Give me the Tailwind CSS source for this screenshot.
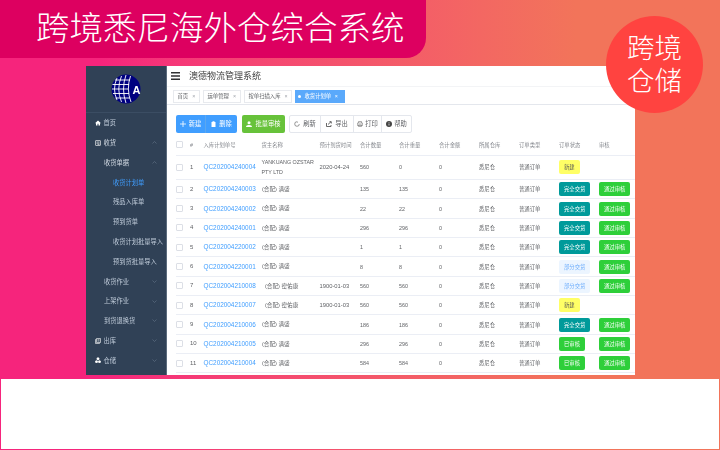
<!DOCTYPE html>
<html lang="zh"><head><meta charset="utf-8"><script src="https://cdn.jsdelivr.net/npm/@tailwindcss/browser@4"></script></head>
<body class="m-0 font-['Liberation_Sans','Noto_Sans_CJK_SC',sans-serif]">
<div class="relative w-[720px] h-[450px] overflow-hidden bg-linear-to-r from-[#f6247c] from-[14%] via-[#f4556b] via-[50%] to-[#f2745a] to-[80%]">
  <div class="w-[426px] h-[58px] bg-[#dd0060] rounded-br-[20px] flex items-center pl-[36px] text-white text-[33.5px] leading-none font-light tracking-normal">跨境悉尼海外仓综合系统</div>
  <div class="absolute left-[606px] top-[16px] w-[97px] h-[97px] rounded-full bg-[#ff4340] z-10 flex items-center justify-center text-white text-[27.5px] leading-[33px] font-light text-center">跨境<br>仓储</div>

  <div class="ml-[86px] mt-[8px] w-[549px] h-[309px] flex bg-white overflow-hidden blur-[0.25px]">
    <aside class="w-[81px] shrink-0 bg-[#304156] border-r border-[#5b6b7d] text-[#bfcbd9] text-[6.25px]">
      <div class="h-[47px] border-b border-[#3b4d63] flex items-center justify-center">
        <svg width="30" height="30" viewBox="0 0 30 30"><circle cx="15" cy="15" r="14.5" fill="#000080"/><g stroke="#fff" stroke-width=".9" fill="none"><path d="M6 4 Q1 15 6 26M10.500 2 Q5 15 10.500 28M15 1 Q10 15 15 29M19.500 2 Q15 15 20 28"/><path d="M4 6H19M1.500 10.500H18M1 15H17M2 19.500H18M4.500 24H19"/></g><text x="21.500" y="20" fill="#fff" font-size="11" font-weight="700">A</text></svg>
      </div>
      <div class="h-[19.8px] flex items-center pl-[9px] gap-[2.5px]"><svg class="w-[6px] h-[6px]" viewBox="0 0 12 12" fill="#fff"><path d="M6 1 0 6.500h2V11h3V7.500h2V11h3V6.500h2z"/></svg><span>首页</span></div>
      <div class="h-[19.8px] flex items-center pl-[9px] pr-[9px] gap-[2.5px] text-[#d5dde6]"><svg class="w-[6px] h-[6px]" viewBox="0 0 12 12" fill="none" stroke="#fff" stroke-width="1.2"><rect x="1" y="1" width="10" height="10" rx="1"/><path d="M3 4h6M3 6.500h6M5 9h4"/></svg><span>收货</span><svg class="ml-auto w-[5px] h-[3px]" viewBox="0 0 10 6" fill="none" stroke="#65758a" stroke-width="1.2"><path d="M1 5 5 1l4 4"/></svg></div>
      <div class="h-[19.8px] flex items-center pl-[18px] pr-[9px] text-[#d5dde6]"><span>收货单据</span><svg class="ml-auto w-[5px] h-[3px]" viewBox="0 0 10 6" fill="none" stroke="#65758a" stroke-width="1.2"><path d="M1 5 5 1l4 4"/></svg></div>
      <div class="h-[19.8px] flex items-center pl-[27px] text-[#409eff]">收货计划单</div>
      <div class="h-[19.8px] flex items-center pl-[27px]">残品入库单</div>
      <div class="h-[19.8px] flex items-center pl-[27px]">预到货单</div>
      <div class="h-[19.8px] flex items-center pl-[27px] whitespace-nowrap">收货计划批量导入</div>
      <div class="h-[19.8px] flex items-center pl-[27px] whitespace-nowrap">预到货批量导入</div>
      <div class="h-[19.8px] flex items-center pl-[18px] pr-[9px]"><span>收货作业</span><svg class="ml-auto w-[5px] h-[3px]" viewBox="0 0 10 6" fill="none" stroke="#65758a" stroke-width="1.2"><path d="M1 1l4 4 4-4"/></svg></div>
      <div class="h-[19.8px] flex items-center pl-[18px] pr-[9px]"><span>上架作业</span><svg class="ml-auto w-[5px] h-[3px]" viewBox="0 0 10 6" fill="none" stroke="#65758a" stroke-width="1.2"><path d="M1 1l4 4 4-4"/></svg></div>
      <div class="h-[19.8px] flex items-center pl-[18px] pr-[9px]"><span>到货退换货</span><svg class="ml-auto w-[5px] h-[3px]" viewBox="0 0 10 6" fill="none" stroke="#65758a" stroke-width="1.2"><path d="M1 1l4 4 4-4"/></svg></div>
      <div class="h-[19.8px] flex items-center pl-[9px] pr-[9px] gap-[2.5px]"><svg class="w-[6px] h-[6px]" viewBox="0 0 12 12" fill="none" stroke="#fff" stroke-width="1.2"><path d="M3 1h8v8H9v2H1V3h2zM3 3v6h6M5 3.500h4M5 6h4"/></svg><span>出库</span><svg class="ml-auto w-[5px] h-[3px]" viewBox="0 0 10 6" fill="none" stroke="#65758a" stroke-width="1.2"><path d="M1 1l4 4 4-4"/></svg></div>
      <div class="h-[19.8px] flex items-center pl-[9px] pr-[9px] gap-[2.5px]"><svg class="w-[6px] h-[6px]" viewBox="0 0 12 12" fill="#fff"><path d="M6 0.500 8.700 2v3L6 6.500 3.300 5V2zM3 6.500 5.700 8v3L3 12 0.300 11V8zM9 6.500 11.700 8v3L9 12 6.300 11V8z"/></svg><span>仓储</span><svg class="ml-auto w-[5px] h-[3px]" viewBox="0 0 10 6" fill="none" stroke="#65758a" stroke-width="1.2"><path d="M1 1l4 4 4-4"/></svg></div>
    </aside>

    <main class="flex-1 min-w-0">
      <div class="h-[21px] border-b border-[#f3f4f6] flex items-center pl-[4px] gap-[9px]">
        <svg class="w-[9px] h-[8px]" viewBox="0 0 9 8" fill="#303133"><path d="M0 0h9v1.500H0zM0 3.250h9v1.500H0zM0 6.500h9V8H0z"/></svg>
        <span class="text-[9px] leading-none text-[#3f3f3f]">澳德物流管理系统</span>
      </div>
      <div class="h-[18px] border-b border-[#e4e7ed] flex items-start pt-[3px] pl-[6px] gap-[3px] text-[5.35px] text-[#606266]">
        <span class="h-[13px] w-[27px] border border-[#e8eaee] flex items-center pl-[3.500px] gap-[4px]">首页<i class="not-italic text-[#a0a4ab]">×</i></span>
        <span class="h-[13px] w-[38px] border border-[#e8eaee] flex items-center pl-[3.500px] gap-[4px]">运单管理<i class="not-italic text-[#a0a4ab]">×</i></span>
        <span class="h-[13px] w-[48px] border border-[#e8eaee] flex items-center pl-[3.500px] gap-[4px]">按单扫描入库<i class="not-italic text-[#a0a4ab]">×</i></span>
        <span class="h-[13px] w-[50px] bg-[#5aa9fb] text-white flex items-center pl-[3px] gap-[3.500px]"><i class="w-[3px] h-[3px] rounded-full bg-white"></i>收货计划单<i class="not-italic">×</i></span>
      </div>
      <div class="h-[18px] mt-[10px] ml-[9px] flex items-center text-[6.3px]">
        <div class="flex h-full rounded-[2px] overflow-hidden bg-[#409eff] text-white">
          <span class="w-[30px] border-r border-[#5ba7f0] flex items-center justify-center gap-[3px]"><svg class="w-[6px] h-[6px]" viewBox="0 0 6 6" fill="none" stroke="#fff" stroke-width=".8"><path d="M3 0v6M0 3h6"/></svg>新建</span>
          <span class="w-[31px] flex items-center justify-center gap-[3px]"><svg class="w-[5px] h-[6px]" viewBox="0 0 5 6" fill="#fff"><path d="M.5 1h4v5h-4zM1.500 0h2v.7h-2z"/></svg>删除</span>
        </div>
        <span class="ml-[5px] w-[43px] h-full rounded-[2px] bg-[#67c23a] text-white flex items-center justify-center gap-[3px]"><svg class="w-[6px] h-[6px]" viewBox="0 0 6 6" fill="#fff"><circle cx="3" cy="1.800" r="1.500"/><path d="M0 6q0-2 3-2t3 2z"/></svg>批量审核</span>
        <div class="ml-[4px] flex h-full text-[#606266] border border-[#e4e7ed] rounded-[2px]">
          <span class="w-[31px] border-r border-[#e4e7ed] flex items-center justify-center gap-[3px]"><svg class="w-[6px] h-[6px]" viewBox="0 0 6 6" fill="none" stroke="#555" stroke-width=".6"><path d="M5.300 3A2.300 2.300 0 1 1 3 .7M3 .7l1 .8"/></svg>刷新</span>
          <span class="w-[33px] border-r border-[#e4e7ed] flex items-center justify-center gap-[3px]"><svg class="w-[6px] h-[6px]" viewBox="0 0 6 6" fill="none" stroke="#444" stroke-width=".8"><path d="M.5 2v3.500h4.500V4M2 3.500 5 .7M3.500.7H5.300V2.500"/></svg>导出</span>
          <span class="w-[28px] border-r border-[#e4e7ed] flex items-center justify-center gap-[2px]"><svg class="w-[6px] h-[6px]" viewBox="0 0 6 6" fill="none" stroke="#777" stroke-width=".6"><path d="M1.500 2V.5h3V2M.4 2h5.200v2.500H.4zM1.500 3.800h3v1.700h-3z"/></svg>打印</span>
          <span class="w-[29px] flex items-center justify-center gap-[2px]"><svg class="w-[6px] h-[6px]" viewBox="0 0 6 6"><circle cx="3" cy="3" r="3" fill="#444"/><path d="M3 2.500v2M3 1.300v.7" stroke="#fff" stroke-width=".7"/></svg>帮助</span>
        </div>
      </div>
      <table class="mt-[2px] ml-[9px] w-[459px] table-fixed border-collapse text-[5.35px] text-[#606266]">
        <colgroup><col class="w-[14px]"><col class="w-[13.500px]"><col class="w-[58px]"><col class="w-[58px]"><col class="w-[40.500px]"><col class="w-[39px]"><col class="w-[40px]"><col class="w-[40px]"><col class="w-[40px]"><col class="w-[40px]"><col class="w-[40px]"><col class="w-[36px]"></colgroup>
        <thead><tr class="h-[20px] border-b border-[#ebeef5] text-left text-[#85888e] [&>th]:font-normal">
          <th><i class="block w-[7px] h-[7px] border border-[#dcdfe6] rounded-[1px]"></i></th><th>#</th><th>入库计划单号</th><th>货主名称</th><th>预计到货时间</th><th>合计数量</th><th>合计重量</th><th>合计金额</th><th>所属仓库</th><th>订单类型</th><th>订单状态</th><th>审核</th>
        </tr></thead>
        <tbody class="[&>tr]:border-b [&>tr]:border-[#ebeef5] [&>tr]:h-[19.35px]">
          <tr class="h-[24.5px]!"><td><i class="block w-[7px] h-[7px] border border-[#dcdfe6] rounded-[1px]"></i></td><td class="text-[6px]">1</td><td class="text-[6.4px] text-[#409eff]">QC202004240004</td><td class="leading-[10px]">YANKUANG OZSTAR PTY LTD</td><td class="text-[5.8px]">2020-04-24</td><td>560</td><td>0</td><td>0</td><td>悉尼仓</td><td>普通订单</td><td><span class="inline-block h-[14px] leading-[14px] px-[5px] rounded-[2px] bg-[#ffff66] text-[#555]">新建</span></td><td></td></tr>
          <tr><td><i class="block w-[7px] h-[7px] border border-[#dcdfe6] rounded-[1px]"></i></td><td class="text-[6px]">2</td><td class="text-[6.4px] text-[#409eff]">QC202004240003</td><td class="text-[5.6px] pl-[0.5px]">(合配) 满盛</td><td></td><td>135</td><td>135</td><td>0</td><td>悉尼仓</td><td>普通订单</td><td><span class="inline-block h-[14px] leading-[14px] px-[5px] rounded-[2px] bg-[#009a9a] text-white">完全交货</span></td><td><span class="inline-block h-[14px] leading-[14px] px-[5px] rounded-[2px] bg-[#2ecf3a] text-white">通过审核</span></td></tr>
          <tr><td><i class="block w-[7px] h-[7px] border border-[#dcdfe6] rounded-[1px]"></i></td><td class="text-[6px]">3</td><td class="text-[6.4px] text-[#409eff]">QC202004240002</td><td class="text-[5.6px] pl-[0.5px]">(合配) 满盛</td><td></td><td>22</td><td>22</td><td>0</td><td>悉尼仓</td><td>普通订单</td><td><span class="inline-block h-[14px] leading-[14px] px-[5px] rounded-[2px] bg-[#009a9a] text-white">完全交货</span></td><td><span class="inline-block h-[14px] leading-[14px] px-[5px] rounded-[2px] bg-[#2ecf3a] text-white">通过审核</span></td></tr>
          <tr><td><i class="block w-[7px] h-[7px] border border-[#dcdfe6] rounded-[1px]"></i></td><td class="text-[6px]">4</td><td class="text-[6.4px] text-[#409eff]">QC202004240001</td><td class="text-[5.6px] pl-[0.5px]">(合配) 满盛</td><td></td><td>296</td><td>296</td><td>0</td><td>悉尼仓</td><td>普通订单</td><td><span class="inline-block h-[14px] leading-[14px] px-[5px] rounded-[2px] bg-[#009a9a] text-white">完全交货</span></td><td><span class="inline-block h-[14px] leading-[14px] px-[5px] rounded-[2px] bg-[#2ecf3a] text-white">通过审核</span></td></tr>
          <tr><td><i class="block w-[7px] h-[7px] border border-[#dcdfe6] rounded-[1px]"></i></td><td class="text-[6px]">5</td><td class="text-[6.4px] text-[#409eff]">QC202004220002</td><td class="text-[5.6px] pl-[0.5px]">(合配) 满盛</td><td></td><td>1</td><td>1</td><td>0</td><td>悉尼仓</td><td>普通订单</td><td><span class="inline-block h-[14px] leading-[14px] px-[5px] rounded-[2px] bg-[#009a9a] text-white">完全交货</span></td><td><span class="inline-block h-[14px] leading-[14px] px-[5px] rounded-[2px] bg-[#2ecf3a] text-white">通过审核</span></td></tr>
          <tr><td><i class="block w-[7px] h-[7px] border border-[#dcdfe6] rounded-[1px]"></i></td><td class="text-[6px]">6</td><td class="text-[6.4px] text-[#409eff]">QC202004220001</td><td class="text-[5.6px] pl-[0.5px]">(合配) 满盛</td><td></td><td>8</td><td>8</td><td>0</td><td>悉尼仓</td><td>普通订单</td><td><span class="inline-block h-[14px] leading-[14px] px-[5px] rounded-[2px] bg-[#ecf5ff] text-[#6eaefc]">部分交货</span></td><td><span class="inline-block h-[14px] leading-[14px] px-[5px] rounded-[2px] bg-[#2ecf3a] text-white">通过审核</span></td></tr>
          <tr><td><i class="block w-[7px] h-[7px] border border-[#dcdfe6] rounded-[1px]"></i></td><td class="text-[6px]">7</td><td class="text-[6.4px] text-[#409eff]">QC202004210008</td><td class="text-[5.6px] pl-[3.500px]">(合配) 密佑康</td><td class="text-[5.8px]">1900-01-03</td><td>560</td><td>560</td><td>0</td><td>悉尼仓</td><td>普通订单</td><td><span class="inline-block h-[14px] leading-[14px] px-[5px] rounded-[2px] bg-[#ecf5ff] text-[#6eaefc]">部分交货</span></td><td><span class="inline-block h-[14px] leading-[14px] px-[5px] rounded-[2px] bg-[#2ecf3a] text-white">通过审核</span></td></tr>
          <tr><td><i class="block w-[7px] h-[7px] border border-[#dcdfe6] rounded-[1px]"></i></td><td class="text-[6px]">8</td><td class="text-[6.4px] text-[#409eff]">QC202004210007</td><td class="text-[5.6px] pl-[3.500px]">(合配) 密佑康</td><td class="text-[5.8px]">1900-01-03</td><td>560</td><td>560</td><td>0</td><td>悉尼仓</td><td>普通订单</td><td><span class="inline-block h-[14px] leading-[14px] px-[5px] rounded-[2px] bg-[#ffff66] text-[#555]">新建</span></td><td></td></tr>
          <tr><td><i class="block w-[7px] h-[7px] border border-[#dcdfe6] rounded-[1px]"></i></td><td class="text-[6px]">9</td><td class="text-[6.4px] text-[#409eff]">QC202004210006</td><td class="text-[5.6px] pl-[0.5px]">(合配) 满盛</td><td></td><td>186</td><td>186</td><td>0</td><td>悉尼仓</td><td>普通订单</td><td><span class="inline-block h-[14px] leading-[14px] px-[5px] rounded-[2px] bg-[#009a9a] text-white">完全交货</span></td><td><span class="inline-block h-[14px] leading-[14px] px-[5px] rounded-[2px] bg-[#2ecf3a] text-white">通过审核</span></td></tr>
          <tr><td><i class="block w-[7px] h-[7px] border border-[#dcdfe6] rounded-[1px]"></i></td><td class="text-[6px]">10</td><td class="text-[6.4px] text-[#409eff]">QC202004210005</td><td class="text-[5.6px] pl-[0.5px]">(合配) 满盛</td><td></td><td>296</td><td>296</td><td>0</td><td>悉尼仓</td><td>普通订单</td><td><span class="inline-block h-[14px] leading-[14px] px-[5px] rounded-[2px] bg-[#2ecf3a] text-white">已审核</span></td><td><span class="inline-block h-[14px] leading-[14px] px-[5px] rounded-[2px] bg-[#2ecf3a] text-white">通过审核</span></td></tr>
          <tr><td><i class="block w-[7px] h-[7px] border border-[#dcdfe6] rounded-[1px]"></i></td><td class="text-[6px]">11</td><td class="text-[6.4px] text-[#409eff]">QC202004210004</td><td class="text-[5.6px] pl-[0.5px]">(合配) 满盛</td><td></td><td>584</td><td>584</td><td>0</td><td>悉尼仓</td><td>普通订单</td><td><span class="inline-block h-[14px] leading-[14px] px-[5px] rounded-[2px] bg-[#2ecf3a] text-white">已审核</span></td><td><span class="inline-block h-[14px] leading-[14px] px-[5px] rounded-[2px] bg-[#2ecf3a] text-white">通过审核</span></td></tr>
        </tbody>
      </table>
    </main>
  </div>
  <div class="mt-[4px] mx-px h-[70px] bg-white"></div>
</div>
</body></html>
